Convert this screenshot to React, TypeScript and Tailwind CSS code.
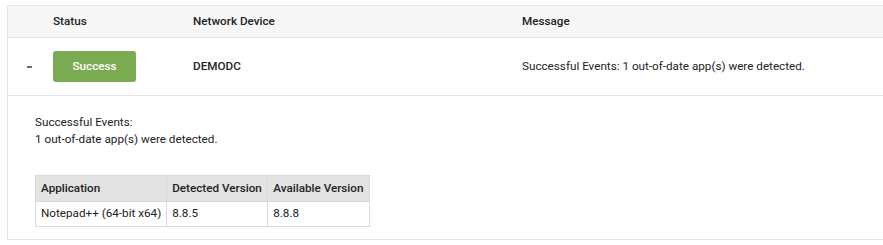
import React from "react";

export default function App() {
  return (
    <div className="w-[883px] h-[245px] bg-white overflow-hidden pt-[5px] pl-[7px]" style={{ fontFamily: "Roboto, 'Liberation Sans', sans-serif" }}>
      <div className="w-[900px] border-l border-t border-b border-[#e4e4e4] text-[11.7px] text-[#222]">
        {/* header */}
        <div className="flex h-[32px] items-center bg-[#f7f7f7] border-b border-[#e4e4e4] font-medium">
          <div className="w-[45px]" />
          <div className="w-[140px]">Status</div>
          <div className="w-[329px]">Network Device</div>
          <div className="flex-1">Message</div>
        </div>
        {/* row */}
        <div className="flex h-[58px] items-center border-b border-[#e4e4e4]">
          <div className="w-[45px] flex justify-start pl-[19px]">
            <div className="w-[5px] h-[2px] bg-[#5f6f7f]" />
          </div>
          <div className="w-[140px]">
            <div className="w-[83px] h-[31px] rounded-[3px] bg-[#7bab50] text-white font-medium flex items-center justify-center">Success</div>
          </div>
          <div className="w-[329px] font-medium">DEMODC</div>
          <div className="flex-1">Successful Events: 1 out-of-date app(s) were detected.</div>
        </div>
        {/* detail */}
        <div className="h-[143px] pl-[27px] pt-[18px]">
          <div className="leading-[17px]">
            <div>Successful Events:</div>
            <div>1 out-of-date app(s) were detected.</div>
          </div>
          <table className="mt-[27px] border-collapse border border-[#d9d9d9]">
            <thead>
              <tr className="bg-[#e3e3e3] h-[26px]">
                <th className="w-[131px] text-left font-medium px-[5px] border border-[#d9d9d9] whitespace-nowrap">Application</th>
                <th className="w-[101px] text-left font-medium px-[5px] border border-[#d9d9d9] whitespace-nowrap">Detected Version</th>
                <th className="w-[102px] text-left font-medium px-[5px] border border-[#d9d9d9] whitespace-nowrap">Available Version</th>
              </tr>
            </thead>
            <tbody>
              <tr className="h-[25px]">
                <td className="px-[5px] border border-[#d9d9d9] whitespace-nowrap">Notepad++ (64-bit x64)</td>
                <td className="px-[5px] border border-[#d9d9d9]">8.8.5</td>
                <td className="px-[5px] border border-[#d9d9d9]">8.8.8</td>
              </tr>
            </tbody>
          </table>
        </div>
      </div>
    </div>
  );
}
